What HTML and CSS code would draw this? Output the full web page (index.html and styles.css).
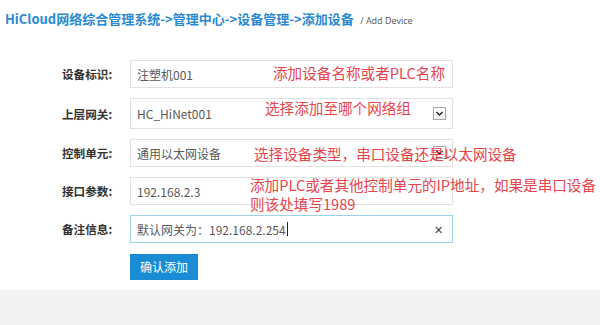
FILE: index.html
```html
<!DOCTYPE html>
<html lang="zh-CN">
<head>
<meta charset="utf-8">
<title>添加设备</title>
<link rel="stylesheet" href="styles.css">
</head>
<body>
<div class="page">
  <div class="header">
    <span class="crumbs">HiCloud网络综合管理系统-&gt;管理中心-&gt;设备管理-&gt;添加设备</span>
    <span class="sub">/ Add Device</span>
  </div>
  <div class="form">
    <div class="row">
      <div class="label">设备标识:</div>
      <div class="field">注塑机001</div>
      <div class="note note1">添加设备名称或者PLC名称</div>
    </div>
    <div class="row row-sel">
      <div class="label">上层网关:</div>
      <div class="field">HC_HiNet001<span class="arrow"><svg width="9" height="9" viewBox="0 0 9 9"><path d="M1.5 3 L4.5 6 L7.5 3" fill="none" stroke="#222" stroke-width="1.4"/></svg></span></div>
      <div class="note note2">选择添加至哪个网络组</div>
    </div>
    <div class="row">
      <div class="label">控制单元:</div>
      <div class="field">通用以太网设备<span class="arrow"><svg width="9" height="9" viewBox="0 0 9 9"><path d="M1.5 3 L4.5 6 L7.5 3" fill="none" stroke="#222" stroke-width="1.4"/></svg></span></div>
      <div class="note note3">选择设备类型，串口设备还是以太网设备</div>
    </div>
    <div class="row">
      <div class="label">接口参数:</div>
      <div class="field">192.168.2.3</div>
      <div class="note note4">添加PLC或者其他控制单元的IP地址，如果是串口设备<br>则该处填写1989</div>
    </div>
    <div class="row">
      <div class="label">备注信息:</div>
      <div class="field field-focus">默认网关为：192.168.2.254<span class="caret"></span><span class="clear">✕</span></div>
    </div>
    <div class="row row-btn">
      <div class="label"></div>
      <div><span class="btn">确认添加</span></div>
    </div>
  </div>
  <div class="footer"></div>
</div>
</body>
</html>
```

FILE: styles.css
```css
html, body {
  margin: 0;
  padding: 0;
  background: #fff;
}
.page {
  width: 600px;
  height: 325px;
  overflow: hidden;
  display: flex;
  flex-direction: column;
  font-family: "Noto Sans CJK SC", "Microsoft YaHei", sans-serif;
}
.header {
  padding: 8px 0 0 5px;
  height: 18px;
  line-height: 18px;
  white-space: nowrap;
}
.crumbs {
  color: #2a8ad2;
  font-size: 13px;
  font-weight: bold;
}
.sub {
  color: #555;
  font-family: "Open Sans", "Noto Sans", sans-serif;
  font-size: 9px;
  margin-left: 3px;
}
.form {
  padding: 34px 0 0 62px;
  display: flex;
  flex-direction: column;
  gap: 10px;
}
.row {
  position: relative;
  display: grid;
  grid-template-columns: 68px 323px;
  align-items: center;
  height: 28px;
}
.row-sel {
  height: 31px;
}
.label {
  font-size: 11.6px;
  font-weight: bold;
  color: #333;
}
.field {
  position: relative;
  box-sizing: border-box;
  height: 100%;
  border: 1px solid #e2e2e2;
  padding: 0 0 0 6px;
  display: flex;
  align-items: center;
  font-size: 12px;
  color: #5a5a5a;
}
.field-focus {
  border-color: #9fd2e8;
}
.arrow {
  position: absolute;
  right: 6px;
  top: 50%;
  margin-top: -7px;
  width: 13px;
  height: 13px;
  box-sizing: border-box;
  border: 1px solid #a8a8a8;
  background: linear-gradient(#ffffff, #ececec);
  display: flex;
  align-items: center;
  justify-content: center;
}
.caret {
  display: inline-block;
  width: 1px;
  height: 14px;
  background: #222;
  margin-left: 1px;
}
.clear {
  position: absolute;
  right: 9px;
  top: 50%;
  transform: translateY(-50%);
  font-size: 11px;
  color: #444;
}
.note {
  position: absolute;
  color: #e8454c;
  font-size: 14.6px;
  line-height: 19px;
  white-space: nowrap;
}
.note1 { left: 211px; top: 3px; }
.note2 { left: 203px; top: 0px; }
.note3 { left: 192px; top: 5px; }
.note4 { left: 188px; top: -2px; }
.row-btn {
  height: 26px;
}
.btn {
  display: inline-flex;
  align-items: center;
  justify-content: center;
  width: 68px;
  height: 26px;
  background: #1a8cd6;
  color: #fff;
  font-size: 12px;
}
.footer {
  margin-top: auto;
  height: 35px;
  background: #f2f2f2;
}
```
